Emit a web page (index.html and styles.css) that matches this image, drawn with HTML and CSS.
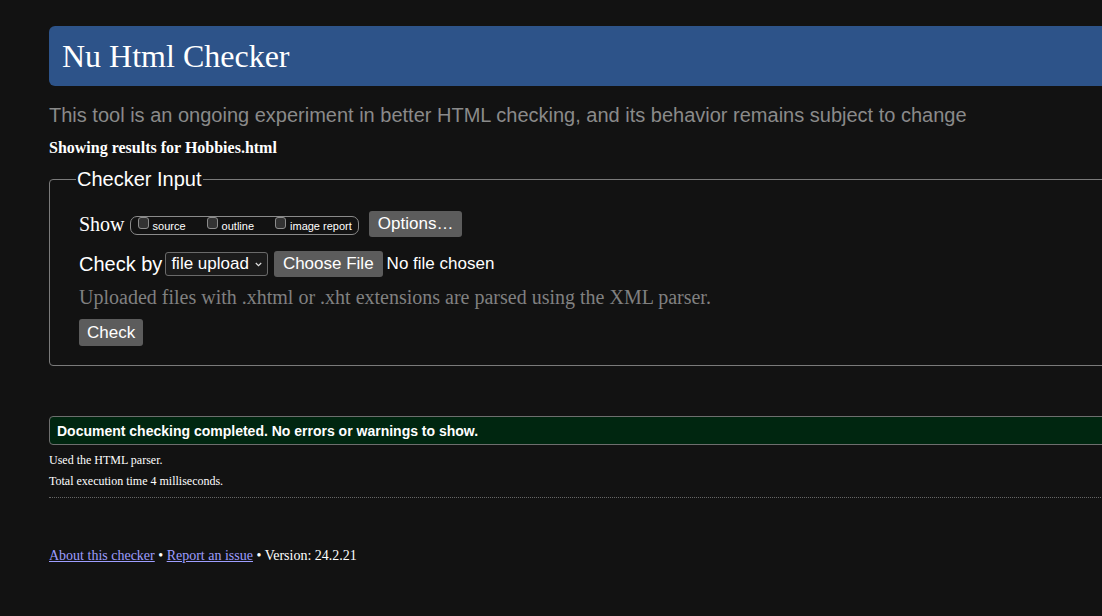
FILE: index.html
```html
<!DOCTYPE html>
<html lang="en">
<head>
<meta charset="utf-8">
<title>Nu Html Checker</title>
<link rel="stylesheet" href="styles.css">
</head>
<body>
<div class="page">
  <h1 class="title">Nu Html Checker</h1>
  <p class="lede">This tool is an ongoing experiment in better HTML checking, and its behavior remains subject to change</p>
  <p class="showing">Showing results for Hobbies.html</p>

  <fieldset class="input">
    <legend class="legend">Checker Input</legend>
    <div class="row row-show">
      <span class="show-label">Show</span>
      <div class="opts">
        <label class="opt"><input type="checkbox" class="cb"><span class="opt-text">source</span></label>
        <label class="opt"><input type="checkbox" class="cb"><span class="opt-text">outline</span></label>
        <label class="opt opt-last"><input type="checkbox" class="cb"><span class="opt-text">image report</span></label>
      </div>
      <button class="btn btn-options" type="button">Options…</button>
    </div>
    <div class="row row-check">
      <span class="checkby-label">Check by</span>
      <span class="select">file upload<svg class="chev" width="7" height="5" viewBox="0 0 7 5"><path d="M0.8 1 L3.5 3.7 L6.2 1" fill="none" stroke="#e0e0e0" stroke-width="1.2"/></svg></span>
      <button class="btn btn-file" type="button">Choose File</button>
      <span class="nofile">No file chosen</span>
    </div>
    <p class="note">Uploaded files with .xhtml or .xht extensions are parsed using the XML parser.</p>
    <div class="submit"><button class="btn btn-check" type="button">Check</button></div>
  </fieldset>

  <div class="success">Document checking completed. No errors or warnings to show.</div>
  <p class="info info-first">Used the HTML parser.</p>
  <p class="info">Total execution time 4 milliseconds.</p>
  <hr class="dotted">
  <p class="footer"><a href="#" class="link">About this checker</a> • <a href="#" class="link">Report an issue</a> • Version: 24.2.21</p>
</div>
</body>
</html>
```

FILE: styles.css
```css
html {
  overflow: hidden;
  background: #121212;
}

body {
  margin: 0;
  background: #121212;
  color: #ffffff;
  font-family: "Liberation Serif", serif;
}

.page {
  width: 1200px;
  padding: 26px 0 0 49px;
}

.title {
  margin: 0;
  height: 60px;
  padding-left: 13px;
  background: #2d5389;
  border-radius: 6px 0 0 6px;
  font: 400 32px/60px "Liberation Serif", serif;
  color: #ffffff;
}

.lede {
  margin: 18px 0 0;
  font: 20px/23px "Liberation Sans", Arial, sans-serif;
  color: #8a8a8a;
}

.showing {
  margin: 12px 0 0;
  font: bold 16px/18px "Liberation Serif", serif;
  color: #ffffff;
}

.input {
  margin: 11px 0 0;
  min-width: 0;
  padding: 0 0 19px 29px;
  border: 1px solid #7a7a7a;
  border-radius: 4px;
}

.legend {
  margin-left: -3px;
  padding: 0 1px;
  font: 20px/23px "Liberation Sans", Arial, sans-serif;
  color: #ffffff;
}

.row {
  display: flex;
  align-items: center;
  height: 26px;
}

.row-show {
  margin-top: 20px;
}

.row-check {
  margin-top: 14px;
}

.show-label {
  font: 20px/23px "Liberation Serif", serif;
}

.opts {
  display: flex;
  align-items: flex-start;
  align-self: flex-start;
  box-sizing: border-box;
  height: 19px;
  margin: 5px 0 0 5px;
  padding: 0 6px 0 7px;
  border: 1px solid #8a8a8a;
  border-radius: 7px;
}

.opt {
  display: flex;
  align-items: flex-start;
  margin-right: 21px;
}

.opt-last {
  margin-right: 0;
}

.cb {
  appearance: none;
  -webkit-appearance: none;
  box-sizing: border-box;
  width: 11px;
  height: 12px;
  margin: 0 4px 0 0;
  background: #333333;
  border: 1px solid #8c8c8c;
  border-radius: 3px;
}

.opt-text {
  font: 11px/18px "Liberation Sans", Arial, sans-serif;
  color: #ffffff;
}

.btn {
  box-sizing: border-box;
  height: 26px;
  padding: 0 9px;
  border: 0;
  border-radius: 3px;
  background: #5c5c5c;
  color: #ffffff;
  font: 17px/26px "Liberation Sans", Arial, sans-serif;
}

.btn-options {
  margin-left: 10px;
}

.checkby-label {
  font: 20px/23px "Liberation Sans", Arial, sans-serif;
}

.select {
  display: flex;
  align-items: center;
  box-sizing: border-box;
  height: 24px;
  margin-left: 3px;
  padding: 0 5px 0 5px;
  border: 1px solid #6a6a6a;
  border-radius: 3px;
  background: #1b1b1b;
  font: 17px/22px "Liberation Sans", Arial, sans-serif;
}

.chev {
  margin-left: 6px;
  margin-top: 1px;
}

.btn-file {
  margin-left: 6px;
}

.nofile {
  margin-left: 4px;
  font: 17px/22px "Liberation Sans", Arial, sans-serif;
}

.note {
  margin: 9px 0 0;
  font: 20px/23px "Liberation Serif", serif;
  color: #808080;
}

.submit {
  margin-top: 10px;
}

.btn-check {
  height: 27px;
  line-height: 27px;
  padding: 0 8px;
}

.success {
  box-sizing: border-box;
  height: 29px;
  margin-top: 50px;
  padding: 1px 0 0 7px;
  border: 1px solid #6e6e6e;
  border-radius: 4px;
  background: #002610;
  font: bold 14px/26px "Liberation Sans", Arial, sans-serif;
  color: #ffffff;
}

.info {
  margin: 0;
  font: 12px/21px "Liberation Serif", serif;
  color: #ffffff;
}

.info-first {
  margin-top: 5px;
}

.dotted {
  height: 0;
  margin: 5px 0 0;
  border: 0;
  border-top: 1px dotted #666666;
}

.footer {
  margin: 50px 0 0;
  font: 14px/16px "Liberation Serif", serif;
  color: #ffffff;
}

.link {
  color: #9e9eff;
}
```
